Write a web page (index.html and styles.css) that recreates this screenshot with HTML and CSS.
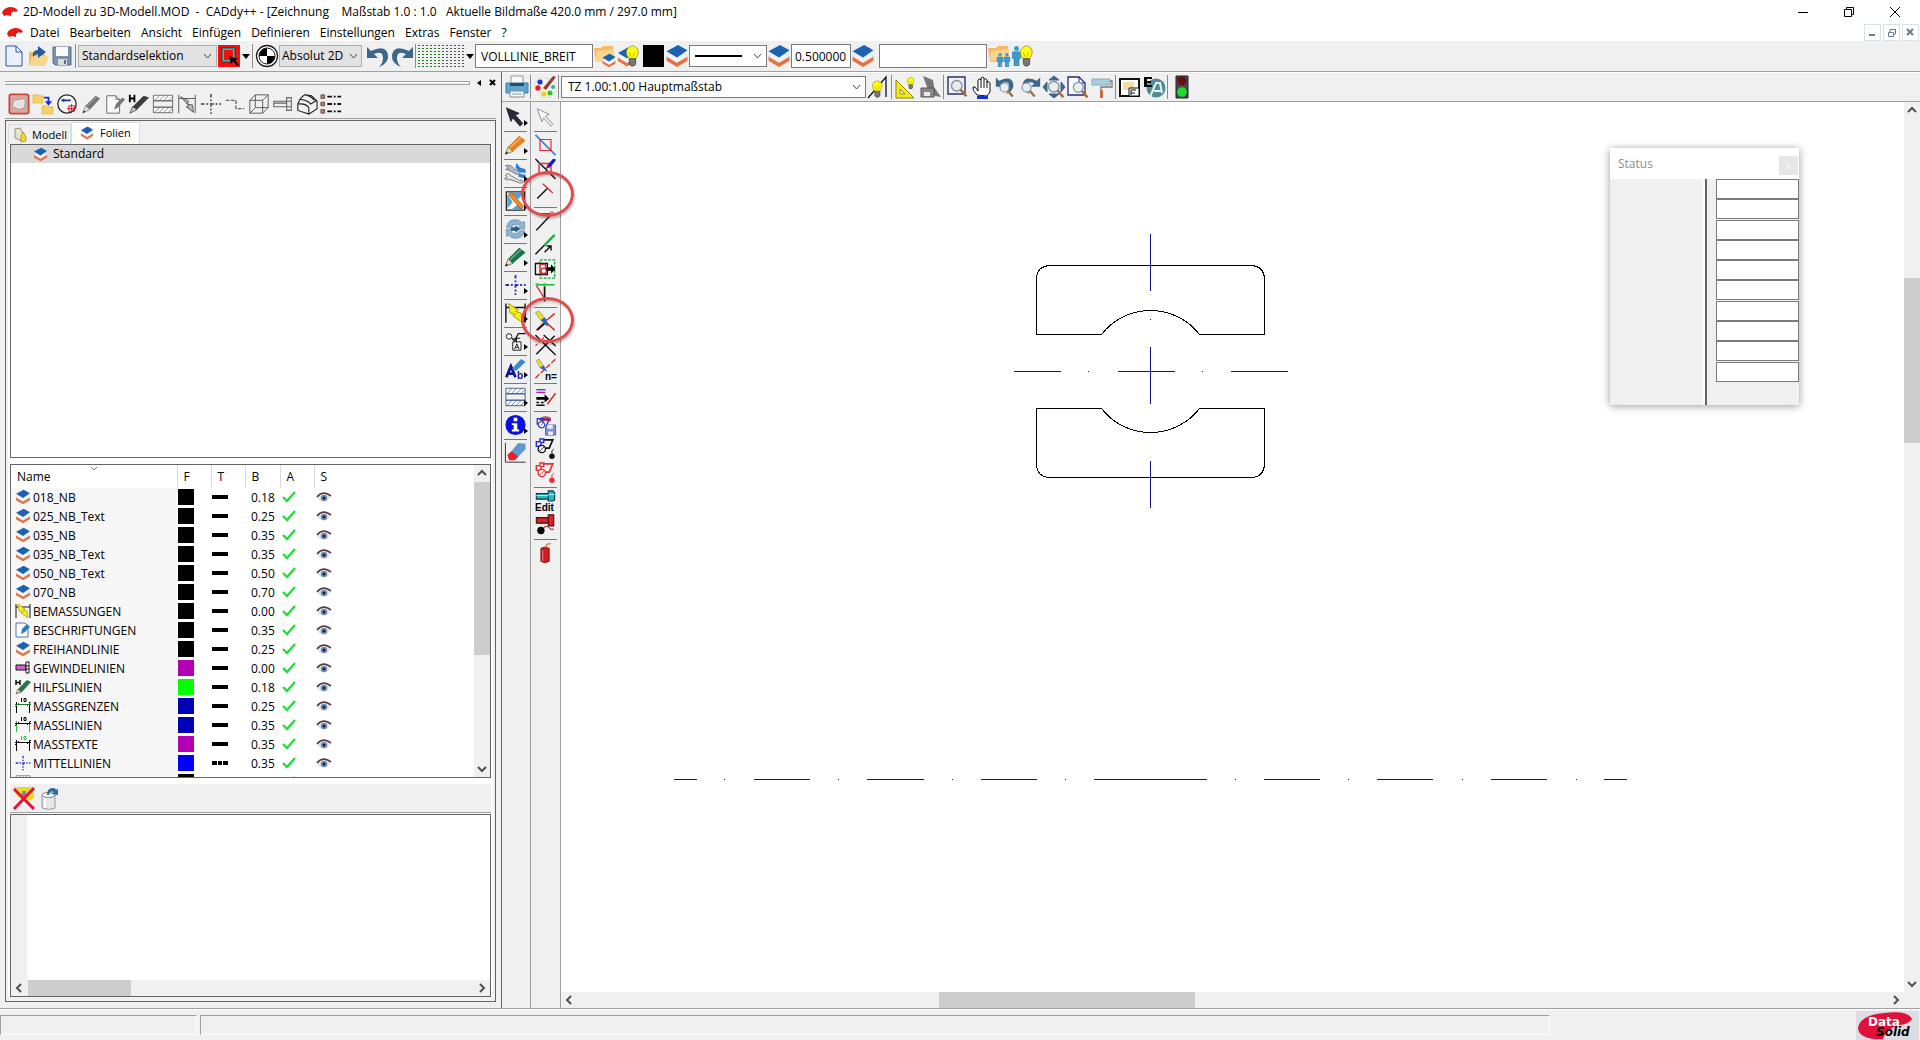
FILE: index.html
```
<!DOCTYPE html>
<html lang="de">
<head>
<meta charset="utf-8">
<title>2D-Modell zu 3D-Modell.MOD - CADdy++</title>
<link rel="stylesheet" href="styles.css">
</head>
<body>
<svg class="defs" aria-hidden="true">
<defs>
<symbol id="logo" viewBox="0 0 16 10"><path d="M0 6Q1 1 8 0Q14 0 16 4L13 5L12 4L9 6L9 9L5 8L2 9Z" fill="#f01414"/></symbol>
<symbol id="new" viewBox="0 0 24 24"><path d="M4 2h10l6 6v14H4z" fill="#e9f2fc" stroke="#33539c"/><path d="M14 2v6h6z" fill="#fff" stroke="#33539c"/></symbol>
<symbol id="open" viewBox="0 0 24 24"><path d="M3 21V8h6l2 2h8v11z" fill="#f0b85e"/><path d="M6 12h17l-4 10H3z" fill="#fbd68d"/><path d="M7 13Q6 6 12 6V2l8 6-8 6v-4Q9 10 7 13z" fill="#1f5c9e"/></symbol>
<symbol id="save" viewBox="0 0 24 24"><path d="M3 3h18v18H5l-2-2z" fill="#7a91a8" stroke="#566f88"/><path d="M6 3h12v9H6z" fill="#fafafa"/><path d="M8 15h9v6H8z" fill="#d8dde2"/><path d="M14 16h2v4h-2z" fill="#5a6f84"/></symbol>
<symbol id="redsel" viewBox="0 0 24 24"><path d="M1 1h22v22H1z" fill="#f80c0c"/><path d="M6 5h11v12H6z" fill="none" stroke="#2ac0c0" stroke-width="2"/><path d="M5 4h13v14H5z" fill="none" stroke="#222" stroke-width=".7"/><path d="M12 12l9 3-3 1 4 5-2 1-4-5-2 3z"/></symbol>
<symbol id="origin" viewBox="0 0 24 24"><circle cx="12" cy="12" r="10.500" fill="#fff" stroke="#222" stroke-width="1.300"/><path d="M12 12V4a8 8 0 0 0-8 8zM12 12v8a8 8 0 0 0 8-8z"/><circle cx="12" cy="12" r="8" fill="none" stroke="#222"/></symbol>
<symbol id="undo" viewBox="0 0 24 24"><path d="M1 3v11h11L8 10q9-4 9 4 0 5-4 9 10-4 9-12Q20 0 5 7z" fill="#3d678a"/></symbol>
<symbol id="redo" viewBox="0 0 24 24"><path d="M23 3v11H12l4-4Q7 6 7 14q0 5 4 9Q1 19 2 11 4 0 19 7z" fill="#3d678a"/></symbol>
<pattern id="gdot" width="4" height="3" patternUnits="userSpaceOnUse"><path d="M0 0h2v1H0z" fill="#1d7a1d"/></pattern>
<pattern id="kdot" width="4" height="3" patternUnits="userSpaceOnUse"><path d="M0 0h2v1H0z" fill="#555"/></pattern>
<symbol id="layers" viewBox="1 0 22 23"><path d="M2 16l10 6 10-6v-4l-10 5-10-5z" fill="#e8703f"/><path d="M2 12l10 6 10-6-4-3-6 4-6-4z" fill="#f2f4f8" stroke="#c5d0de" stroke-width=".5"/><path d="M2 7l11-6 9 5-10 7z" fill="#1c62b4"/></symbol>
<symbol id="bulb" viewBox="0 0 24 24"><path d="M9 15Q3 8 8 3q5-4 9 0 4 5-1 12z" fill="#ffff10" stroke="#8b8a10" stroke-width=".8"/><path d="M9 8l2 5M15 8l-2 5" stroke="#d0a800" fill="none"/><path d="M9 15h7v6l-2 2h-3l-2-2z" fill="#777" stroke="#222" stroke-width=".6"/></symbol>
<symbol id="folderlay" viewBox="0 0 24 24"><path d="M1 4h7l2-2h10v16H3z" fill="#f6b964"/><path d="M4 7l17-2 1 13H3z" fill="#fbd590"/><use href="#layers" x="8" y="9" width="16" height="15"/></symbol>
<symbol id="bulblay" viewBox="0 0 24 24"><use href="#layers" x="0" y="2" width="20" height="22"/><use href="#bulb" x="4" y="0" width="22" height="24"/></symbol>
<symbol id="man" viewBox="0 0 12 24"><circle cx="6" cy="3" r="3" fill="#3b9bd0"/><path d="M1 7h10v8H9v9H7v-7H6v7H3v-9H1z" fill="#3b9bd0" stroke="#206f9e" stroke-width=".6"/></symbol>
<symbol id="foldermen" viewBox="0 0 24 24"><path d="M1 4h8l2-2h10v16H3z" fill="#f6b964"/><path d="M4 7l18-2v12H3z" fill="#fbd590"/><use href="#man" x="9" y="9" width="8" height="14"/><use href="#man" x="16" y="9" width="8" height="14"/></symbol>
<symbol id="bulbmen" viewBox="0 0 24 24"><use href="#man" x="0" y="2" width="11" height="20"/><use href="#bulb" x="4" y="0" width="22" height="24"/></symbol>
<symbol id="printer" viewBox="0 0 24 24"><path d="M6 1h12v8H6z" fill="#f8f8f8" stroke="#999"/><path d="M1 8h22v10H1z" fill="#5aa6d2" stroke="#3a7ba5"/><path d="M5 8h14v3H5z" fill="#2f4a60"/><path d="M5 16h14v6H5z" fill="#f4f4f4" stroke="#889"/><path d="M7 18h10v2H7z" fill="#b8cbd8"/></symbol>
<symbol id="palette" viewBox="0 0 24 24"><path d="M1 12Q2 3 12 3q11 1 11 10-1 10-12 10-3 0-3-4t-3-3q-3-1-4-4z" fill="#f5f3ea" stroke="#ccc" stroke-width=".6"/><circle cx="7" cy="7" r="2.600" fill="#1638d8"/><circle cx="5" cy="13" r="2.700" fill="#e82020"/><circle cx="11" cy="19" r="2.600" fill="#f2d020"/><circle cx="17" cy="18" r="2.500" fill="#28c828"/><circle cx="20" cy="12" r="2" fill="#18a8c8"/><path d="M10 13l10-12 3 1-10 13z" fill="#8f4430"/></symbol>
<symbol id="bulbline" viewBox="0 0 24 24"><path d="M2 23L20 2v20" stroke="#111" stroke-width="1.300" fill="none"/><use href="#bulb" x="2" y="5" width="18" height="18"/></symbol>
<symbol id="triangle" viewBox="0 0 24 24"><path d="M2 5v18h18z" fill="#f5ea20" stroke="#8d8600"/><path d="M6 14v5h5z" fill="#fff" stroke="#8d8600"/><use href="#bulb" x="10" y="0" width="13" height="16"/></symbol>
<symbol id="graytool" viewBox="0 0 24 24"><path d="M5 1l10 4 1 7 7 10-6-1-8-9z" fill="#777"/><path d="M3 13h13v9H3z" fill="#888" stroke="#555"/><path d="M6 17h6v4H6z" fill="#e8e8e8"/></symbol>
<symbol id="lens" viewBox="0 0 24 24"><path d="M14 14l7 8" stroke="#a56a3a" stroke-width="3"/><circle cx="10" cy="10" r="6" fill="#e6edf1" stroke="#8a9298" stroke-width="1.500"/></symbol>
<symbol id="zoomwin" viewBox="0 0 24 24"><path d="M2 2h17v17H2z" fill="none" stroke="#27306f" stroke-width="1.400"/><use href="#lens" x="2" y="2" width="21" height="21"/></symbol>
<symbol id="hand" viewBox="0 0 24 24"><path d="M7 20Q2 15 3 12l2 0 3 4V5q2-2 3 0V3q2-2 3 0v1q2-1 3 1v2q2-1 3 1v9l-3 4z" fill="#fff" stroke="#111"/><path d="M11 5v8M14 4v9M17 6v7" stroke="#111"/><path d="M7 21h11v3H7z" fill="#1030d0"/></symbol>
<symbol id="zundo" viewBox="0 0 24 24"><use href="#undo" x="1" y="0" width="20" height="20"/><use href="#lens" x="3" y="5" width="18" height="18"/></symbol>
<symbol id="zredo" viewBox="0 0 24 24"><use href="#redo" x="3" y="0" width="20" height="20"/><use href="#lens" x="1" y="5" width="18" height="18"/></symbol>
<symbol id="zall" viewBox="0 0 24 24"><path d="M12 1l5 4H7zM1 12l4-5v10zM23 12l-4-5v10zM12 23l-5-4h10z" fill="#3d678a" stroke="#3d678a"/><use href="#lens" x="3" y="3" width="21" height="21"/></symbol>
<symbol id="zpage" viewBox="0 0 24 24"><path d="M2 2h11l6 6v12H2z" fill="#fff" stroke="#26267e" stroke-width="1.300"/><path d="M13 2v6h6" fill="none" stroke="#26267e"/><use href="#lens" x="4" y="4" width="20" height="20"/></symbol>
<symbol id="roller" viewBox="0 0 24 24"><path d="M2 4h18v6H2z" fill="#a8cfdf" stroke="#6f98aa" stroke-width=".7"/><path d="M20 6h2v6H11v3" fill="none" stroke="#777" stroke-width="1.300"/><path d="M10 15h3v8h-3z" fill="#c06a48"/></symbol>
<symbol id="viewwin" viewBox="0 0 24 24"><path d="M2 4h19v17H2z" fill="#fff" stroke="#111" stroke-width="2"/><path d="M5 7h11v8H5z" fill="#f3dda0"/><path d="M11 13h10v8H11z" fill="#fff" stroke="#111"/><path d="M13 15h5M13 18h4M13 15v5" stroke="#111"/></symbol>
<symbol id="globe" viewBox="0 0 24 24"><circle cx="14" cy="13" r="9.500" fill="#4e8d96"/><path d="M8 22l6-14 4 0 2 10M12 16h7" stroke="#e8f2f2" fill="none" stroke-width="2"/><path d="M2 2h8v2H5v2h4v2H5v2h5v2H2z"/></symbol>
<symbol id="traffic" viewBox="0 0 24 24"><path d="M6 1h12v22H6z" fill="#4a4a4a" stroke="#222"/><circle cx="12" cy="6" r="4.500" fill="#6a0c14"/><circle cx="12" cy="17" r="4.800" fill="#1bdd35"/></symbol>

<symbol id="redcube" viewBox="0 0 24 24"><rect x="1.500" y="1.500" width="21" height="21" rx="2" fill="#dba79f" stroke="#c8463a" stroke-width="2"/><path d="M6 8l11-2 2 3-1 7-6 2-7-3z" fill="#e4e4e4" stroke="#888" stroke-width=".7"/></symbol>
<symbol id="folders" viewBox="0 0 24 24"><path d="M1 2h6l1 1h4v8H1zM11 14h5l1 1h6v8H11z" fill="#f8cf68" stroke="#d9a93c" stroke-width=".6"/><path d="M13 5h5v5" fill="none" stroke="#1a2cd8" stroke-width="2"/><path d="M14 9h8l-4 5z" fill="#1a2cd8"/></symbol>
<symbol id="circ" viewBox="0 0 24 24"><circle cx="12" cy="12" r="10" fill="#f4f4f4" stroke="#222" stroke-width="1.400"/><path d="M5 8l4-2v1h7v2H9v1z" fill="#1a3a8a"/><path d="M14 14h6v6h-6zM17 12v10M12 17h10" fill="none" stroke="#c81e2c"/></symbol>
<symbol id="gpencil" viewBox="0 0 24 24"><path d="M3 22l3-8L17 3l5 3L11 18z" fill="#777"/><path d="M3 22l3-8 5 4z" fill="#ddd" stroke="#777" stroke-width=".6"/><path d="M3 22l1-3 2 1z" fill="#222"/><path d="M8 14L18 4" stroke="#aaa"/></symbol>
<symbol id="pagepen" viewBox="0 0 24 24"><path d="M3 3h10l4 4v15H3z" fill="#fafafa" stroke="#666"/><path d="M13 3v4h4" fill="none" stroke="#666"/><path d="M11 18l2-6 7-7 3 2-8 9z" fill="#777"/></symbol>
<symbol id="hpencil" viewBox="0 0 24 24"><path d="M2 22l3-7L17 3l6 2L10 18z" fill="#3d3d3d"/><path d="M2 22l3-7 5 3z" fill="#ccc" stroke="#333" stroke-width=".7"/><path d="M2 2v8M7 2v8M2 6h5" stroke="#000" stroke-width="2" fill="none"/></symbol>
<symbol id="hatch" viewBox="0 0 24 24"><path d="M1 2h22v7H1zM1 15h22v7H1z" fill="#fff"/><path d="M2 9l6-6M7 9l6-6M12 9l6-6M17 9l5-5M2 22l6-6M7 22l6-6M12 22l6-6M17 22l5-5" stroke="currentColor" stroke-width=".8"/><path d="M1.500 2.500h21v6h-21zM1.500 8.500h21v7h-21zM1.500 15.500h21v6h-21z" fill="none" stroke="currentColor"/></symbol>
<symbol id="dimg" viewBox="0 0 24 24"><path d="M3 2v20M21 2v20M3 6h18" stroke="#555" fill="none"/><path d="M5 4l9 5-2 3 6 1 1 8-8-6 3-1z" fill="#b8b8b8" stroke="#555"/></symbol>
<symbol id="cross" viewBox="0 0 24 24"><path d="M12 1v22M1 12h22" stroke="currentColor" stroke-width="2" stroke-dasharray="4 2 2 2"/></symbol>
<symbol id="zline" viewBox="0 0 24 24"><path d="M2 8h11v9h9" fill="none" stroke="#666" stroke-width="1.500" stroke-dasharray="4 1.500"/></symbol>
<symbol id="cube" viewBox="0 0 24 24"><path d="M2 8h14v14H2zM8 2h14v14H8zM2 8l6-6M16 8l6-6M16 22l6-6M2 22l6-6" fill="none" stroke="#555"/></symbol>
<symbol id="bolt" viewBox="0 0 24 24"><path d="M2 9h14v6H2zM2 11h14M16 5h5v14h-5zM16 9h5M16 15h5" fill="#eee" stroke="#666" stroke-width="1.200"/></symbol>
<symbol id="solid" viewBox="0 0 24 24"><path d="M2 12Q5 4 10 2l7 1 6 6v8l-9 6-12-4zM2 12q9-1 12 4v7M5 7q8 1 11 5l7-4M10 2q7 2 10 6" fill="none" stroke="#222" stroke-width="1.200"/></symbol>
<symbol id="lines" viewBox="0 0 24 24"><path d="M1 2h4v4H1zM1 10h4v4H1zM1 18h4v4H1z" fill="#c87838" stroke="#556"/><path d="M8 4h15M8 12h15M8 20h15" stroke="#111" stroke-width="2" stroke-dasharray="5 2 2 2"/></symbol>

<symbol id="model" viewBox="0 0 16 16"><path d="M3 2l5-1 4 6-2 7-7-3z" fill="#e6e4d0" stroke="#99906a"/><path d="M11 5l3 5v4l-5 1V9z" fill="#f2dc20" stroke="#968812" stroke-width=".7"/></symbol>
<symbol id="check" viewBox="0 0 14 12"><path d="M1 6l4 4L13 1" fill="none" stroke="#22dd3c" stroke-width="2.400"/></symbol>
<symbol id="eye" viewBox="0 0 16 12"><path d="M1 7Q7 1 14 6L12 9Q7 12 3 9z" fill="#dfe3ea"/><circle cx="8" cy="7" r="3.200" fill="#6c90b8"/><circle cx="8" cy="7" r="1.500" fill="#16202c"/><path d="M1 6Q7-1 15 5" fill="none" stroke="#5a3d3e" stroke-width="1.700"/></symbol>
<symbol id="dimy" viewBox="0 0 16 16"><path d="M1 1v14M15 1v14M1 4h14" stroke="#111" fill="none"/><path d="M3 1l7 5-2 1 4 1 1 7-7-5 2-1-4-1z" fill="#f4ee14" stroke="#a8a000" stroke-width=".7"/></symbol>
<symbol id="note" viewBox="0 0 16 16"><path d="M1 1h9l3 3v11H1z" fill="#fff" stroke="#5872b8"/><path d="M6 12l1-5 5-5 3 3-5 5z" fill="#2a7fc4"/></symbol>
<symbol id="thread" viewBox="0 0 16 16"><path d="M1 5h10v5H1z" fill="#d060d0" stroke="#111"/><path d="M11 2h3v11h-3zM11 6h3M11 9h3" fill="#fff" stroke="#111"/></symbol>
<symbol id="help" viewBox="0 0 16 16"><path d="M1 15l2-5 9-9 4 2-9 10z" fill="#28734e"/><path d="M1 15l2-5 3 3z" fill="#e6d9a8" stroke="#444" stroke-width=".5"/><path d="M1 1v5M5 1v5M1 3.500h4" stroke="#000" stroke-width="1.400"/></symbol>
<symbol id="dim" viewBox="0 0 16 16"><g fill="none"><path d="M1.500 4v11M14.500 4v11" stroke="var(--ext, #000)"/><path d="M0 6.500h16M0 9l4-4M12 8l4-4" stroke="var(--mid, #000)"/><path d="M6.500 0v4M9 .5h2v3H9z" stroke="var(--txt, #000)"/></g></symbol>

<symbol id="c-arrow" viewBox="0 0 24 24"><path d="M2 2l14 6-4 2 8 9-3 3-8-9-2 4z" fill="#2b2b3e" stroke="#111" stroke-width=".7"/></symbol>
<symbol id="c-warrow" viewBox="0 0 24 24"><path d="M3 3l13 6-4 2 8 9-2 2-8-9-2 4z" fill="#f6f6f6" stroke="#8a8a8a"/></symbol>
<symbol id="c-pencil" viewBox="0 0 24 24"><path d="M1 22l3-8L16 2l7 5L9 19z" fill="currentColor"/><path d="M1 22l3-8 5 5z" fill="#f5dcb0" stroke="#444" stroke-width=".6"/><path d="M1 22l1-3 2 2z" fill="#111"/><path d="M6 15L18 4" stroke="#fff" stroke-opacity=".4" stroke-width="1.500"/></symbol>
<symbol id="c-tools" viewBox="0 0 24 24"><path d="M1 4q6-2 9 3l5 3 2 0v4l-5-1-5-3-6-2 4-1z" fill="#aebcc8" stroke="#556" stroke-width=".7"/><path d="M13 1l4 5 6 2v4l-7-1-4-5zM16 13l7 1v4l-8-2z" fill="#2c7fd0"/><path d="M1 14q4-3 6 1l9 5q4-1 5 2l-4 1-11-4q-4 2-6-1l3-1z" fill="#e4e4e4" stroke="#555" stroke-width=".8"/></symbol>
<symbol id="c-trim" viewBox="0 0 24 24"><path d="M2 2h20v20H2z" fill="#fff" stroke="#222" stroke-width="1.400"/><path d="M3 3h18l-6 7-6-5zM3 5l6 8-6 7zM8 21l6-5 7 5z" fill="#4fa3dc"/><path d="M4 5l4-2 13 15-3 3z" fill="#f08a20" stroke="#9a5310" stroke-width=".7"/></symbol>
<symbol id="c-rot" viewBox="0 0 24 24"><path d="M2 10Q4 1 13 2q4 0 6 3l3-1v8h-8l3-3q-5-5-10 1zM22 14q-2 9-11 8-4 0-6-3l-3 1v-8h8l-3 3q5 5 10-1z" fill="#8fb4d2" stroke="#5d86a8" stroke-width=".7"/><path d="M7 10h5V8l5 4-5 4v-2H7z" fill="#245c8c"/></symbol>
<symbol id="c-text" viewBox="0 0 24 24"><path d="M2 21L7 9l5 12M4 17h7" fill="none" stroke="#14149a" stroke-width="3"/><path d="M8 12L18 1l5 3-10 10z" fill="#3c8ac4"/></symbol>
<symbol id="c-ann" viewBox="0 0 24 24"><circle cx="5" cy="7" r="3" fill="#fff" stroke="#111"/><path d="M8 9l3 3 4-8h8M13 9v4M10 9h7" fill="none" stroke="#111" stroke-width="1.300"/><path d="M9 13h9v9H9z" fill="#fff" stroke="#111"/><path d="M11 21l2.500-6 2.500 6M12 19h3" fill="none" stroke="#111"/></symbol>
<symbol id="c-info" viewBox="0 0 24 24"><circle cx="12" cy="12" r="11" fill="#0a10e0"/><path d="M10 4h4v4h-4zM8 10h6v7h2v2H8v-2h2v-5H8z" fill="#fff"/></symbol>
<symbol id="c-eraser" viewBox="0 0 24 24"><path d="M1 1v21h22" fill="none" stroke="#222"/><path d="M5 13L15 1l8 1v6L12 19z" fill="#5b9bd0"/><path d="M3 14l5-4 7 6-4 4-6 0z" fill="#e8202c"/></symbol>

<symbol id="d-box" viewBox="0 0 24 24"><path d="M1 1l22 22" stroke="#3a8ac8" stroke-width="2"/><path d="M6 6h12v12H6z" fill="none" stroke="#e82838" stroke-width="1.300"/></symbol>
<symbol id="d-boxpen" viewBox="0 0 24 24"><path d="M1 1l22 22" stroke="#111" stroke-width="1.500"/><path d="M5 6h13v11H5z" fill="none" stroke="#e82838" stroke-width="1.500"/><path d="M12 12l2-4 6-7h3v2l-6 7z" fill="#1414d8"/><path d="M12 12l2-4 3 2z" fill="#d81818"/></symbol>
<symbol id="d-tee" viewBox="0 0 24 24"><path d="M9 2l11 10" stroke="#e03030" stroke-width="1.500"/><path d="M14 7L3 18" stroke="#111" stroke-width="1.500"/></symbol>
<symbol id="d-corner" viewBox="0 0 24 24"><path d="M2 4h17" stroke="#d02020" stroke-width="1.500"/><path d="M2 22L19 4" stroke="#111" stroke-width="1.500"/><circle cx="19" cy="4" r="2" fill="#f4b0b0" stroke="#e03030"/></symbol>
<symbol id="d-ext" viewBox="0 0 24 24"><path d="M1 22L11 12" stroke="#111" stroke-width="1.600"/><path d="M11 12L22 1" stroke="#18b038" stroke-width="2.500"/><path d="M11 20l6-6M13 13h5v5" fill="none" stroke="#111" stroke-width="1.600"/></symbol>
<symbol id="d-move" viewBox="0 0 24 24"><path d="M6 2h16v20H6z" fill="none" stroke="#18a838" stroke-width="1.500" stroke-dasharray="3 1.500"/><path d="M1 6h13v12H1z" fill="none" stroke="#111" stroke-width="1.500"/><path d="M6 7h6v10H6z" fill="none" stroke="#e02828" stroke-width="1.300"/><circle cx="10" cy="14" r="3" fill="#fff" stroke="#e02828" stroke-width="1.400"/><path d="M13 10h5V7l5 5-5 5v-3h-5z"/></symbol>
<symbol id="d-angle" viewBox="0 0 24 24"><path d="M3 3h19M11 3v18" stroke="#20b040" stroke-width="1.800"/><path d="M2 4l9 14" stroke="#e02828" stroke-width="1.500"/><path d="M11 5v16" stroke="#111" stroke-width="1.600"/><circle cx="3" cy="3" r="2" fill="#30d050"/><circle cx="11" cy="3" r="2" fill="#30d050"/></symbol>
<symbol id="d-split" viewBox="0 0 24 24"><path d="M2 22l8-8M12 12L22 4M12 13l10 9" stroke="#d82828" stroke-width="1.600"/><path d="M12 14l-9 8" stroke="#111" stroke-width="1.600"/><path d="M1 3l4-2 7 9-4 3z" fill="#f0e020" stroke="#777" stroke-width=".6"/><path d="M7 11l4-3 4 7-1 3z" fill="#1a64d8"/></symbol>
<symbol id="d-cross" viewBox="0 0 24 24"><path d="M1 1l22 22M10 1l13 12" stroke="#111" stroke-width="1.500"/><path d="M2 22L22 2" stroke="#111" stroke-width="1.500"/><path d="M1 13L12 2" stroke="#e02828" stroke-width="1.300" stroke-dasharray="3 2"/></symbol>
<symbol id="d-n" viewBox="0 0 24 24"><path d="M1 22L23 1" stroke="#d82828" stroke-width="1.500" stroke-dasharray="6 2"/><path d="M2 3l3-2 5 8-4 2z" fill="#f0e020" stroke="#777" stroke-width=".6"/><path d="M6 11l4-3 4 7z" fill="#1a64d8"/></symbol>
<symbol id="d-trans" viewBox="0 0 24 24"><path d="M2 4h10" stroke="#4040e0" stroke-width="1.500"/><path d="M2 7h10" stroke="#b020b0" stroke-width="1.500"/><path d="M2 12h9V9l5 5-5 4v-3H2z"/><path d="M2 18h3M7 18h3M2 21h9" stroke="#111" stroke-width="1.500"/><path d="M14 20L23 8" stroke="#d83030" stroke-width="1.800"/></symbol>
<symbol id="d-shapes" viewBox="0 0 24 24"><path d="M7 5h13l-5 9M2 4h8v8H2z" fill="none" stroke="currentColor" stroke-width="1.800"/><circle cx="8" cy="13" r="4.500" fill="#fff" stroke="currentColor" stroke-width="1.500"/><path d="M5 16l6-6" stroke="currentColor"/></symbol>
<symbol id="d-save" viewBox="0 0 24 24"><path d="M5 6q4-6 13-2v4H6z" fill="#c85058"/><g color="#2030c8"><use href="#d-shapes" x="0" y="2" width="21" height="18"/></g><path d="M12 12h11v11H12z" fill="#8090d0" stroke="#5460a8"/><path d="M14 12h6v4h-6zM15 19h5v4h-5z" fill="#eee"/></symbol>
<symbol id="d-bomb" viewBox="0 0 24 24"><path d="M7 2h13l-4 9H8" fill="none" stroke="currentColor" stroke-width="1.800"/><path d="M2 4h4V1h4v4H7v4H2z" fill="#fff" stroke="var(--b)" stroke-width="1.600"/><circle cx="8" cy="12" r="4" fill="#fff" stroke="currentColor" stroke-width="1.500"/><path d="M5 15l6-6" stroke="currentColor"/><circle cx="19" cy="20" r="3" fill="currentColor"/><path d="M19 17v-3l2-2" fill="none" stroke="currentColor"/></symbol>
<symbol id="d-edit" viewBox="0 0 24 24"><path d="M2 4h13v6H2zM15 1h5l2 2v8l-2 1h-5z" fill="#20c0c0" stroke="#134" stroke-width="1.200"/><path d="M2 6h13M15 5h7" stroke="#9ff"/></symbol>
<symbol id="d-explode" viewBox="0 0 24 24"><path d="M2 4h13v6H2zM15 1h6v12h-6z" fill="#d82028" stroke="#411" stroke-width="1.200"/><circle cx="7" cy="18" r="4"/><path d="M10 15q4-3 6 0t5 1" fill="none" stroke="#a04030" stroke-width="1.300"/></symbol>
<symbol id="d-dyn" viewBox="0 0 24 24"><path d="M7 7q5-3 9 0v14q-5 3-9 0z" fill="#d01c20" stroke="#701010"/><path d="M9 9v12" stroke="#f88"/><path d="M12 6q1-5 6-4" fill="none" stroke="#d88a50" stroke-width="1.500"/></symbol>
<symbol id="nobulb" viewBox="0 0 24 24"><path d="M2 1h20v11q-4 4-9 3Q3 12 2 1z" fill="#e6dc28"/><path d="M10 5h4v7h-4z" fill="#888"/><path d="M2 3l20 20M22 2L2 23" stroke="#e81040" stroke-width="3"/></symbol>
<symbol id="bin" viewBox="0 0 24 24"><path d="M4 9h13v13q-6 3-13 0z" fill="#e6e6e6" stroke="#999"/><path d="M7 12v10" stroke="#fff" stroke-width="2"/><ellipse cx="10.500" cy="9" rx="6.500" ry="2.500" fill="#f6f6f6" stroke="#888"/><path d="M9 9Q9 1 16 2l3 2 1-2v7l-7-1 3-2Q12 4 11 9z" fill="#2a6fa4"/></symbol>
</defs>
</svg>

<header class="titlebar">
  <svg class="applogo"><use href="#logo"/></svg>
  <h1>2D-Modell zu 3D-Modell.MOD  -  CADdy++ - [Zeichnung    Maßstab 1.0 : 1.0   Aktuelle Bildmaße 420.0 mm / 297.0 mm]</h1>
  <div class="winbtns">
    <button aria-label="Minimieren"><svg width="12" height="12"><path d="M1 6.500h10"/></svg></button>
    <button aria-label="Wiederherstellen"><svg width="12" height="12"><path d="M1.500 3.500h7v7h-7zM3.500 3v-1.500h7v7H9"/></svg></button>
    <button aria-label="Schließen"><svg width="12" height="12"><path d="M1 1l10 10M11 1L1 11"/></svg></button>
  </div>
</header>

<nav class="menubar">
  <svg class="applogo"><use href="#logo"/></svg>
  <button>Datei</button><button>Bearbeiten</button><button>Ansicht</button><button>Einfügen</button><button>Definieren</button><button>Einstellungen</button><button>Extras</button><button>Fenster</button><button>?</button>
  <div class="mdibtns">
    <button aria-label="Fenster minimieren"><svg width="9" height="9"><path d="M1 7h6" stroke-width="2"/></svg></button>
    <button aria-label="Fenster wiederherstellen"><svg width="9" height="9"><path d="M1.500 4.500h5v4h-5zM3 4V1.500h5.500V6H7M3 1.500h6"/></svg></button>
    <button aria-label="Fenster schließen"><svg width="9" height="9"><path d="M1 1l6 6M7 1L1 7" stroke-width="2"/></svg></button>
  </div>
</nav>

<div class="toolbar main-tools">
  <button class="ib" aria-label="Neu"><svg><use href="#new"/></svg></button>
  <button class="ib" aria-label="Öffnen"><svg><use href="#open"/></svg></button>
  <button class="ib" aria-label="Speichern"><svg><use href="#save"/></svg></button>
  <i class="sep"></i>
  <select class="combo gray w-sel" aria-label="Selektion"><option>Standardselektion</option></select>
  <button class="ib" aria-label="Selektionsfenster"><svg><use href="#redsel"/></svg></button>
  <button class="drop" aria-label="Selektion wählen"></button>
  <i class="sep"></i>
  <button class="ib" aria-label="Ursprung"><svg><use href="#origin"/></svg></button>
  <select class="combo gray w-abs" aria-label="Koordinaten"><option>Absolut 2D</option></select>
  <i class="gap"></i>
  <button class="ib" aria-label="Rückgängig"><svg><use href="#undo"/></svg></button>
  <button class="ib" aria-label="Wiederholen"><svg><use href="#redo"/></svg></button>
  <i class="sep"></i>
  <button class="ib grid" aria-label="Raster"><svg><rect width="24" height="22" fill="url(#gdot)"/><rect x="24" width="24" height="22" fill="url(#kdot)"/></svg></button>
  <button class="drop" aria-label="Raster wählen"></button>
  <input class="field w-lay" aria-label="Folie" value="VOLLLINIE_BREIT">
  <button class="ib" aria-label="Folie öffnen"><svg><use href="#folderlay"/></svg></button>
  <button class="ib" aria-label="Folie sichtbar"><svg><use href="#bulblay"/></svg></button>
  <button class="ib" aria-label="Farbe"><span class="color"></span></button>
  <button class="ib" aria-label="Farbe der Folie"><svg><use href="#layers"/></svg></button>
  <span class="linetype"><select class="combo" aria-label="Linientyp"><option></option></select></span>
  <button class="ib" aria-label="Linientyp der Folie"><svg><use href="#layers"/></svg></button>
  <input class="field w-num" aria-label="Linienbreite" value="0.500000">
  <button class="ib" aria-label="Breite der Folie"><svg><use href="#layers"/></svg></button>
  <i class="gap"></i>
  <input class="field w-grp" aria-label="Gruppe">
  <button class="ib" aria-label="Gruppe öffnen"><svg><use href="#foldermen"/></svg></button>
  <button class="ib" aria-label="Gruppe sichtbar"><svg><use href="#bulbmen"/></svg></button>
</div>

<main class="workspace">
  <aside class="dock">
    <div class="dockhead"><span class="grip"></span><button aria-label="Einklappen"><svg width="5" height="6"><path d="M4 0v6L0 3z"/></svg></button><button aria-label="Leiste schließen"><svg width="7" height="7"><path d="M1 1l5 5M6 1L1 6" stroke="#000" stroke-width="2"/></svg></button></div>
    <div class="docktools">
      <button class="ib" aria-label="Modellansicht"><svg><use href="#redcube"/></svg></button>
      <button class="ib" aria-label="Ordner"><svg><use href="#folders"/></svg></button>
      <button class="ib" aria-label="Kreis"><svg><use href="#circ"/></svg></button>
      <button class="ib" aria-label="Stift"><svg><use href="#gpencil"/></svg></button>
      <button class="ib" aria-label="Beschriftung"><svg><use href="#pagepen"/></svg></button>
      <button class="ib" aria-label="Hilfslinien"><svg><use href="#hpencil"/></svg></button>
      <button class="ib c-gray" aria-label="Schraffur"><svg><use href="#hatch"/></svg></button>
      <button class="ib" aria-label="Bemaßung"><svg><use href="#dimg"/></svg></button>
      <button class="ib c-gray" aria-label="Mittellinien"><svg><use href="#cross"/></svg></button>
      <button class="ib" aria-label="Schnittlinie"><svg><use href="#zline"/></svg></button>
      <button class="ib" aria-label="Quader"><svg><use href="#cube"/></svg></button>
      <button class="ib" aria-label="Normteil"><svg><use href="#bolt"/></svg></button>
      <button class="ib" aria-label="Körper"><svg><use href="#solid"/></svg></button>
      <button class="ib" aria-label="Linienarten"><svg><use href="#lines"/></svg></button>
    </div>
    <section class="frame">
      <div class="tabs" role="tablist">
        <button role="tab"><svg><use href="#model"/></svg>Modell</button>
        <button role="tab" class="active"><svg><use href="#layers"/></svg>Folien</button>
      </div>
      <div class="page">
        <div class="list tree"><div class="node"><svg><use href="#layers"/></svg>Standard</div></div>
        <div class="list layerlist">
          <div class="tablewrap">
          <table>
            <thead><tr><th>Name<svg class="sort" width="8" height="5"><path d="M1 1l3 3 3-3"/></svg></th><th>F</th><th>T</th><th>B</th><th>A</th><th>S</th></tr></thead>
            <tbody>
            <tr><td><svg><use href="#layers"/></svg>018_NB</td><td><i class="sw"></i></td><td><i class="ln"></i></td><td>0.18</td><td><svg><use href="#check"/></svg></td><td><svg><use href="#eye"/></svg></td></tr>
            <tr><td><svg><use href="#layers"/></svg>025_NB_Text</td><td><i class="sw"></i></td><td><i class="ln"></i></td><td>0.25</td><td><svg><use href="#check"/></svg></td><td><svg><use href="#eye"/></svg></td></tr>
            <tr><td><svg><use href="#layers"/></svg>035_NB</td><td><i class="sw"></i></td><td><i class="ln"></i></td><td>0.35</td><td><svg><use href="#check"/></svg></td><td><svg><use href="#eye"/></svg></td></tr>
            <tr><td><svg><use href="#layers"/></svg>035_NB_Text</td><td><i class="sw"></i></td><td><i class="ln"></i></td><td>0.35</td><td><svg><use href="#check"/></svg></td><td><svg><use href="#eye"/></svg></td></tr>
            <tr><td><svg><use href="#layers"/></svg>050_NB_Text</td><td><i class="sw"></i></td><td><i class="ln"></i></td><td>0.50</td><td><svg><use href="#check"/></svg></td><td><svg><use href="#eye"/></svg></td></tr>
            <tr><td><svg><use href="#layers"/></svg>070_NB</td><td><i class="sw"></i></td><td><i class="ln"></i></td><td>0.70</td><td><svg><use href="#check"/></svg></td><td><svg><use href="#eye"/></svg></td></tr>
            <tr><td><svg><use href="#dimy"/></svg>BEMASSUNGEN</td><td><i class="sw"></i></td><td><i class="ln"></i></td><td>0.00</td><td><svg><use href="#check"/></svg></td><td><svg><use href="#eye"/></svg></td></tr>
            <tr><td><svg><use href="#note"/></svg>BESCHRIFTUNGEN</td><td><i class="sw"></i></td><td><i class="ln"></i></td><td>0.35</td><td><svg><use href="#check"/></svg></td><td><svg><use href="#eye"/></svg></td></tr>
            <tr><td><svg><use href="#layers"/></svg>FREIHANDLINIE</td><td><i class="sw"></i></td><td><i class="ln"></i></td><td>0.25</td><td><svg><use href="#check"/></svg></td><td><svg><use href="#eye"/></svg></td></tr>
            <tr><td><svg><use href="#thread"/></svg>GEWINDELINIEN</td><td><i class="sw purple"></i></td><td><i class="ln"></i></td><td>0.00</td><td><svg><use href="#check"/></svg></td><td><svg><use href="#eye"/></svg></td></tr>
            <tr><td><svg><use href="#help"/></svg>HILFSLINIEN</td><td><i class="sw green"></i></td><td><i class="ln"></i></td><td>0.18</td><td><svg><use href="#check"/></svg></td><td><svg><use href="#eye"/></svg></td></tr>
            <tr><td><svg class="dim mid"><use href="#dim"/></svg>MASSGRENZEN</td><td><i class="sw navy"></i></td><td><i class="ln"></i></td><td>0.25</td><td><svg><use href="#check"/></svg></td><td><svg><use href="#eye"/></svg></td></tr>
            <tr><td><svg class="dim ext"><use href="#dim"/></svg>MASSLINIEN</td><td><i class="sw navy"></i></td><td><i class="ln"></i></td><td>0.35</td><td><svg><use href="#check"/></svg></td><td><svg><use href="#eye"/></svg></td></tr>
            <tr><td><svg class="dim txt"><use href="#dim"/></svg>MASSTEXTE</td><td><i class="sw purple"></i></td><td><i class="ln"></i></td><td>0.35</td><td><svg><use href="#check"/></svg></td><td><svg><use href="#eye"/></svg></td></tr>
            <tr><td><svg class="c-navy"><use href="#cross"/></svg>MITTELLINIEN</td><td><i class="sw blue"></i></td><td><i class="ln dash"></i></td><td>0.35</td><td><svg><use href="#check"/></svg></td><td><svg><use href="#eye"/></svg></td></tr>
            <tr><td><svg class="c-gray"><use href="#hatch"/></svg></td><td><i class="sw"></i></td><td></td><td></td><td><svg><use href="#check"/></svg></td><td><svg><use href="#eye"/></svg></td></tr>
            </tbody>
          </table>
          </div>
          <div class="vscroll"><svg class="ar"><path d="M1 6l4-4 4 4"/></svg><div class="track"><div class="thumb t-list"></div></div><svg class="ar"><path d="M1 2l4 4 4-4"/></svg></div>
        </div>
        <div class="minitools">
          <button class="ib" aria-label="Ausblenden"><svg><use href="#nobulb"/></svg></button>
          <button class="ib" aria-label="Papierkorb"><svg><use href="#bin"/></svg></button>
        </div>
        <div class="list output">
          <div class="gutter"></div>
          <div class="hscroll"><svg class="ar"><path d="M6 1L2 5l4 4"/></svg><div class="track"><div class="thumb t-out"></div></div><svg class="ar"><path d="M2 1l4 4-4 4"/></svg></div>
        </div>
      </div>
    </section>
  </aside>

  <section class="right">
    <div class="toolbar view-tools">
      <button class="ib" aria-label="Drucken"><svg><use href="#printer"/></svg></button>
      <i class="sep"></i>
      <button class="ib" aria-label="Farben"><svg><use href="#palette"/></svg></button>
      <i class="sep"></i>
      <select class="combo w-scale" aria-label="Maßstab"><option>TZ 1.00:1.00 Hauptmaßstab</option></select>
      <button class="ib" aria-label="Linie zeigen"><svg><use href="#bulbline"/></svg></button>
      <i class="sep"></i>
      <button class="ib" aria-label="Geometrie zeigen"><svg><use href="#triangle"/></svg></button>
      <button class="ib" aria-label="Werkzeug"><svg><use href="#graytool"/></svg></button>
      <i class="sep"></i>
      <button class="ib" aria-label="Zoomfenster"><svg><use href="#zoomwin"/></svg></button>
      <button class="ib" aria-label="Verschieben"><svg><use href="#hand"/></svg></button>
      <button class="ib" aria-label="Zoom zurück"><svg><use href="#zundo"/></svg></button>
      <button class="ib" aria-label="Zoom vor"><svg><use href="#zredo"/></svg></button>
      <button class="ib" aria-label="Zoom alles"><svg><use href="#zall"/></svg></button>
      <button class="ib" aria-label="Zoom Blatt"><svg><use href="#zpage"/></svg></button>
      <button class="ib" aria-label="Neu zeichnen"><svg><use href="#roller"/></svg></button>
      <i class="sep"></i>
      <button class="ib" aria-label="Ansichten"><svg><use href="#viewwin"/></svg></button>
      <button class="ib" aria-label="Explorer"><svg><use href="#globe"/></svg></button>
      <i class="sep"></i>
      <button class="ib" aria-label="Ampel"><svg><use href="#traffic"/></svg></button>
    </div>
    <div class="below">
      <div class="palette fly">
        <div><button class="ib" aria-label="Auswählen"><svg><use href="#c-arrow"/></svg></button></div>
        <div><button class="ib c-orange" aria-label="Zeichnen"><svg><use href="#c-pencil"/></svg></button></div>
        <div><button class="ib" aria-label="Werkzeuge"><svg><use href="#c-tools"/></svg></button></div>
        <div><button class="ib" aria-label="Trimmen"><svg><use href="#c-trim"/></svg></button></div>
        <div><button class="ib" aria-label="Transformieren"><svg><use href="#c-rot"/></svg></button></div>
        <div><button class="ib c-green" aria-label="Hilfslinie"><svg><use href="#c-pencil"/></svg></button></div>
        <div><button class="ib c-navy" aria-label="Mittellinie"><svg><use href="#cross"/></svg></button></div>
        <div><button class="ib" aria-label="Bemaßen"><svg><use href="#dimy"/></svg></button></div>
        <div><button class="ib" aria-label="Symbole"><svg><use href="#c-ann"/></svg></button></div>
        <div><button class="ib" aria-label="Text"><svg><use href="#c-text"/><text x="13" y="21" class="lbl" fill="#14149a">b</text></svg></button></div>
        <div><button class="ib c-steel" aria-label="Schraffieren"><svg><use href="#hatch"/></svg></button></div>
        <div><button class="ib" aria-label="Information"><svg><use href="#c-info"/></svg></button></div>
        <div class="plain"><button class="ib" aria-label="Löschen"><svg><use href="#c-eraser"/></svg></button></div>
      </div>
      <div class="palette">
        <div><button class="ib" aria-label="Auswahl"><svg><use href="#c-warrow"/></svg></button></div>
        <div><button class="ib" aria-label="Ausschnitt"><svg><use href="#d-box"/></svg></button><button class="ib" aria-label="Ausschnitt ändern"><svg><use href="#d-boxpen"/></svg></button><button class="ib" aria-label="An Linie trimmen"><svg><use href="#d-tee"/></svg></button></div>
        <div><button class="ib" aria-label="Ecke trimmen"><svg><use href="#d-corner"/></svg></button><button class="ib" aria-label="Verlängern"><svg><use href="#d-ext"/></svg></button><button class="ib" aria-label="Strecken"><svg><use href="#d-move"/></svg></button><button class="ib" aria-label="Winkel"><svg><use href="#d-angle"/></svg></button></div>
        <div><button class="ib" aria-label="Teilen"><svg><use href="#d-split"/></svg></button><button class="ib" aria-label="Kreuzung teilen"><svg><use href="#d-cross"/></svg></button><button class="ib" aria-label="N-fach teilen"><svg><use href="#d-n"/><text x="11" y="22" class="lbl">n=</text></svg></button></div>
        <div><button class="ib" aria-label="Attribute übertragen"><svg><use href="#d-trans"/></svg></button></div>
        <div><button class="ib" aria-label="Gruppe speichern"><svg><use href="#d-save"/></svg></button><button class="ib bomb" aria-label="Gruppe auflösen"><svg><use href="#d-bomb"/></svg></button><button class="ib bomb red" aria-label="Alle auflösen"><svg><use href="#d-bomb"/></svg></button></div>
        <div><button class="ib" aria-label="Normteil bearbeiten"><svg><use href="#d-edit"/><text x="1" y="21" class="lbl">Edit</text></svg></button><button class="ib" aria-label="Normteil auflösen"><svg><use href="#d-explode"/></svg></button></div>
        <div class="plain"><button class="ib" aria-label="Sprengen"><svg><use href="#d-dyn"/></svg></button></div>
      </div>
      <i class="mark m1"></i><i class="mark m2"></i>
      <div class="canvas">
        <svg class="drawing" role="img" aria-label="Zeichnung">
          <g transform="translate(-561 -102)" fill="none" shape-rendering="crispEdges">
            <g stroke="#000">
              <path d="M1036.500 334.500V280Q1036.500 265.500 1051 265.500H1250Q1264.500 265.500 1264.500 280V334.500H1199.500A62 62 0 0 0 1101.500 334.500Z"/>
              <path d="M1036.500 408.500V463Q1036.500 477.500 1051 477.500H1250Q1264.500 477.500 1264.500 463V408.500H1199.500A62 62 0 0 1 1101.500 408.500Z"/>
            </g>
            <g stroke="#101096">
              <path d="M1150.500 234v57M1150.500 319v1M1150.500 347v57M1150.500 432v1M1150.500 461v47"/>
              <path d="M1014 371.500h47M1088 371.500h1M1118 371.500h57M1202 371.500h1M1231 371.500h57"/>
              <path d="M674 779.500h23M724 779.500h1M754 779.500h56M838 779.500h1M867 779.500h57M952 779.500h1M981 779.500h56M1065 779.500h1M1094 779.500h113M1235 779.500h1M1264 779.500h56M1348 779.500h1M1377 779.500h56M1462 779.500h1M1491 779.500h56M1576 779.500h1M1604 779.500h23"/>
            </g>
          </g>
        </svg>
        <div class="vscroll"><svg class="ar"><path d="M1 6l4-4 4 4"/></svg><div class="track"><div class="thumb t-v"></div></div><svg class="ar"><path d="M1 2l4 4 4-4"/></svg></div>
        <div class="hscroll"><svg class="ar"><path d="M6 1L2 5l4 4"/></svg><div class="track"><div class="thumb t-h"></div></div><svg class="ar"><path d="M2 1l4 4-4 4"/></svg></div>
        <section class="status">
          <header><span>Status</span><button aria-label="Status schließen">x</button></header>
          <div class="statusbody">
            <div class="names"></div>
            <div class="values">
              <input aria-label="Wert 1"><input aria-label="Wert 2"><input aria-label="Wert 3"><input aria-label="Wert 4"><input aria-label="Wert 5"><input aria-label="Wert 6"><input aria-label="Wert 7"><input aria-label="Wert 8"><input aria-label="Wert 9"><input aria-label="Wert 10">
            </div>
          </div>
        </section>
      </div>
    </div>
  </section>
</main>

<footer class="statusbar">
  <div class="cell first"></div><div class="cell second"></div>
  <svg class="brand" width="63" height="29" role="img" aria-label="Data Solid"><rect width="63" height="29" fill="#dcdde2"/><path d="M2 17Q4 4 28 2q24-3 28 6-3 5-12 6-14 3-17 14Q3 29 2 17z" fill="#e0103a"/><text x="12" y="15" class="b1">Data</text><text x="20" y="25" class="b2">Solid</text></svg>
</footer>
</body>
</html>
```

FILE: styles.css
```
* { box-sizing: border-box; }

:root {
  --face: #f0f0f0;
  --line: #a0a0a0;
  --dark: #646464;
}

body {
  margin: 0;
  height: 100vh;
  display: flex;
  flex-direction: column;
  overflow: hidden;
  background: var(--face);
  color: #000;
  font: 12px/16px "Open Sans", "Noto Sans", sans-serif;
}

button, input, select { font: inherit; color: inherit; margin: 0; }
button { padding: 0; border: 0; background: none; }
svg { display: block; flex: none; }
i { font-style: normal; }
.defs { position: absolute; width: 0; height: 0; }

.c-gray { color: #666; }
.c-navy { color: #3030b0; }
.c-orange { color: #e8801c; }
.c-green { color: #14754a; }
.c-steel { color: #3a5a90; }

/* title and menu */
.titlebar, .menubar { display: flex; align-items: center; background: #fff; flex: none; }
.titlebar { height: 24px; padding-left: 2px; }
.titlebar h1 { margin: 0 auto 0 5px; font-size: 12px; font-weight: 400; white-space: pre; }
.applogo { width: 16px; height: 10px; }
.winbtns { display: flex; padding-right: 2px; }
.winbtns button { width: 46px; height: 22px; display: grid; place-items: center; }
.winbtns path, .mdibtns path { fill: none; stroke: #000; }
.menubar { height: 17px; padding-left: 7px; gap: 10px; }
.menubar > .applogo { margin-right: -3px; }
.mdibtns { display: flex; gap: 2px; margin-left: auto; padding-right: 1px; }
.mdibtns button { width: 17px; height: 17px; border: 1px solid #d8e2e6; display: grid; place-items: center; }
.mdibtns path { stroke: #6b7a84; }

/* toolbars */
.toolbar { display: flex; align-items: center; flex: none; border-bottom: 1px solid var(--line); }
.main-tools { height: 31px; padding-left: 2px; }
.view-tools { height: 30px; padding-left: 3px; box-shadow: inset 0 1px #fff; }
.ib { width: 24px; height: 24px; flex: none; }
.ib svg { width: 24px; height: 24px; }
.ib.grid { width: 47px; }
.ib.grid svg { width: 47px; height: 22px; }
.sep { width: 4px; height: 24px; flex: none; background: linear-gradient(90deg, transparent 1px, #8c8c8c 1px, #8c8c8c 2px, transparent 2px); }
.gap { width: 4px; flex: none; }
.drop { width: 10px; height: 24px; display: grid; place-items: center; }
.drop::before { content: ""; border: 4px solid transparent; border-top: 5px solid #000; border-bottom: 0; }
.combo {
  appearance: none;
  height: 22px;
  padding: 0 14px 0 3px;
  border: 1px solid #7a7a7a;
  border-radius: 0;
  background: #fff url("data:image/svg+xml,%3Csvg xmlns='http://www.w3.org/2000/svg' width='9' height='6'%3E%3Cpath d='M1 1l3.500 4L8 1' fill='none' stroke='%23444'/%3E%3C/svg%3E") no-repeat right 4px center;
}
.combo.gray { background-color: #e2e2e2; border-color: #b0b0b0; }
.w-sel { width: 139px; }
.w-abs { width: 83px; padding: 0 12px 0 2px; background-position: right 3px center; }
.w-scale { width: 305px; padding-left: 6px; }
.linetype { position: relative; width: 78px; display: flex; }
.linetype .combo { width: 100%; }
.linetype::before { content: ""; position: absolute; left: 6px; top: 10px; width: 47px; height: 2px; background: #000; }
.field { height: 24px; padding: 0 5px; border: 1px solid #7a7a7a; background: #fff; }
.w-lay { width: 118px; }
.w-num { width: 60px; padding: 0 3px; }
.w-grp { width: 108px; }
.color { display: block; width: 21px; height: 22px; margin: 1px auto; background: #000; }

/* left dock */
.workspace { flex: 1; display: flex; min-height: 0; }
.dock { width: 502px; flex: none; display: flex; flex-direction: column; padding: 0 5px 6px 5px; border-right: 1px solid var(--dark); }
.dockhead { height: 18px; padding-top: 3px; display: flex; align-items: center; gap: 7px; }
.grip { width: 465px; height: 4px; border: 1px solid var(--line); border-left: 0; box-shadow: inset 0 1px #fff; }
.dockhead button { display: grid; place-items: center; }
.docktools { display: flex; align-items: center; height: 29px; margin-bottom: 1px; padding: 0 2px 1px; border-bottom: 1px solid var(--line); }
.docktools svg { width: 22px; height: 22px; margin: 1px; }
.frame { flex: 1; min-height: 0; display: flex; flex-direction: column; border: 1px solid var(--dark); padding: 1px 2px 4px; }
.tabs { display: flex; align-items: flex-end; height: 22px; font-size: 11px; }
.tabs button { display: flex; align-items: center; gap: 4px; height: 20px; padding: 0 3px; border: 1px solid #dcdcdc; border-bottom: 0; }
.tabs button svg { width: 16px; height: 16px; }
.tabs .active { height: 22px; background: #fff; padding: 0 8px 2px; gap: 6px; }
.tabs .active svg { width: 14px; height: 14px; }
.page { flex: 1; min-height: 0; display: flex; flex-direction: column; background: #fff; padding: 0 2px; }
.list { min-height: 0; border: 1px solid var(--dark); background: #fff; overflow: hidden; }
.tree { flex: 314; margin-bottom: 6px; }
.node { display: flex; align-items: center; gap: 5px; height: 18px; padding-left: 22px; background: #d9d9d9; }
.node svg { width: 15px; height: 15px; }
.layerlist { flex: 315; display: flex; }
.tablewrap { flex: 1; min-width: 0; overflow: hidden; }
table { width: 100%; table-layout: fixed; border-collapse: collapse; }
th, td { padding: 0 0 0 2px; text-align: left; font-weight: 400; white-space: nowrap; }
th { position: relative; height: 23px; padding: 1px 0 0 6px; border-left: 1px solid #dcd6dc; }
th:first-child { width: 166px; border-left: 0; }
th:nth-child(2), th:nth-child(3), th:nth-child(5) { width: 34px; }
th:nth-child(4) { width: 35px; }
.sort { position: absolute; left: 79px; top: 1px; fill: none; stroke: #777; }
td { height: 19px; line-height: 17px; }
td:first-child { padding-left: 4px; background: #f7f7f7; }
td:first-child svg { display: inline-block; width: 16px; height: 16px; margin-right: 2px; vertical-align: top; }
td:nth-child(2), td:nth-child(3) { padding-left: 1px; }
td:nth-child(4) { padding-left: 6px; }
td:nth-child(5) svg { width: 14px; height: 12px; }
td:nth-child(6) svg { width: 16px; height: 12px; }
.sw { display: block; width: 16px; height: 16px; background: #000; }
.purple { background: #b400b4; }
.green { background: #0f0; }
.navy { background: #0000b4; }
.blue { background: #00f; }
.ln { display: block; width: 16px; height: 4px; background: #000; }
.ln.dash { background: linear-gradient(90deg, #000 5px, #fff 5px, #fff 6px, #000 6px, #000 10px, #fff 10px, #fff 11px, #000 11px); }
.dim.ext { --ext: #20c040; }
.dim.mid { --mid: #207838; }
.dim.txt { --txt: #20c040; }
.minitools { display: flex; align-items: center; gap: 2px; height: 29px; margin: 6px 0 1px; padding-left: 2px; background: var(--face); border-bottom: 1px solid var(--line); }
.output { flex: 182; display: flex; flex-direction: column; }
.gutter { flex: 1; width: 16px; background: var(--face); }

/* scroll bars */
.vscroll, .hscroll { display: flex; align-items: center; background: var(--face); flex: none; }
.vscroll { width: 16px; flex-direction: column; padding: 4px 0; }
.hscroll { height: 16px; padding: 0 4px; }
.ar { width: 10px; height: 8px; fill: none; stroke: #505050; stroke-width: 2; }
.hscroll .ar { width: 8px; height: 10px; }
.track { flex: 1; align-self: stretch; display: flex; flex-direction: column; }
.hscroll .track { flex-direction: row; }
.thumb { background: #cdcdcd; }
.t-list { height: 60%; margin-top: 5px; }
.t-out { width: 103px; margin-left: 5px; }
.t-v { height: 19%; margin-top: 164px; }
.t-h { width: 256px; margin-left: 366px; }

/* right side */
.right { flex: 1; min-width: 0; display: flex; flex-direction: column; }
.below { flex: 1; min-height: 0; display: flex; position: relative; }
.palette { width: 30px; flex: none; padding: 2px 3px; border-right: 1px solid var(--line); }
.fly { width: 29px; padding: 2px 2px; }
.palette > div { display: flex; flex-direction: column; padding-top: 1px; padding-bottom: 2px; border-bottom: 1px solid #777; width: 23px; }
.palette > .plain { border-bottom: 0; }
.palette svg { margin: 1px 0; width: 23px; height: 22px; overflow: visible; }
.fly .ib { position: relative; }
.fly > div:not(.plain) .ib::after { content: ""; position: absolute; right: 0; bottom: 3px; border: 3px solid transparent; border-left: 4px solid #000; border-right: 0; }
.lbl { font: bold 10px "Liberation Sans", sans-serif; }
.bomb { color: #111; --b: #2030e0; }
.bomb.red { color: #e83030; --b: #e83030; }
.mark { position: absolute; left: 19px; width: 53px; height: 46px; border: 3px solid #de4b4b; border-radius: 50%; box-shadow: 1px 2px 2px #0004, inset 1px 2px 2px #0003; z-index: 1; }
.m1 { top: 69px; }
.m2 { top: 195px; }
.canvas { flex: 1; min-width: 0; display: grid; grid-template: minmax(0, 1fr) 16px / minmax(0, 1fr) 16px; background: #fff; position: relative; }
.drawing { width: 100%; height: 100%; }
.canvas > .hscroll { grid-column: 1 / 2; }
.canvas::after { content: ""; background: var(--face); }

.status { position: absolute; right: 121px; top: 46px; width: 189px; background: var(--face); box-shadow: 0 1px 8px #0006; }
.status header { display: flex; justify-content: space-between; align-items: center; height: 31px; padding: 0 1px 0 8px; background: #fff; color: #8c8c8c; }
.status header button { width: 19px; height: 19px; margin-top: 4px; background: #e6e6e6; color: #f6f6f6; line-height: 16px; }
.statusbody { display: flex; height: 226px; }
.names { width: 97px; border-right: 2px solid var(--dark); box-shadow: inset -2px 0 #fff; }
.values { flex: 1; height: 203px; margin-left: 9px; display: grid; grid-template-rows: repeat(10, 1fr); }
.values input { width: 100%; min-width: 0; min-height: 0; height: 20px; padding: 0 2px; border: 1px solid #7a7a7a; background: #fff; }

/* status bar */
.statusbar { height: 32px; flex: none; display: flex; gap: 3px; border-top: 1px solid var(--line); box-shadow: inset 0 1px #fff; }
.cell { height: 20px; margin-top: 6px; border: 1px solid var(--line); border-right-color: #fff; border-bottom-color: #fff; }
.first { width: 197px; }
.second { flex: 1; margin-right: 303px; }
.brand { margin: 2px 1px 0 0; }
.b1, .b2 { font: bold 12px "DejaVu Sans", sans-serif; fill: #fff; }
.b2 { font-style: italic; fill: #000; }
```
